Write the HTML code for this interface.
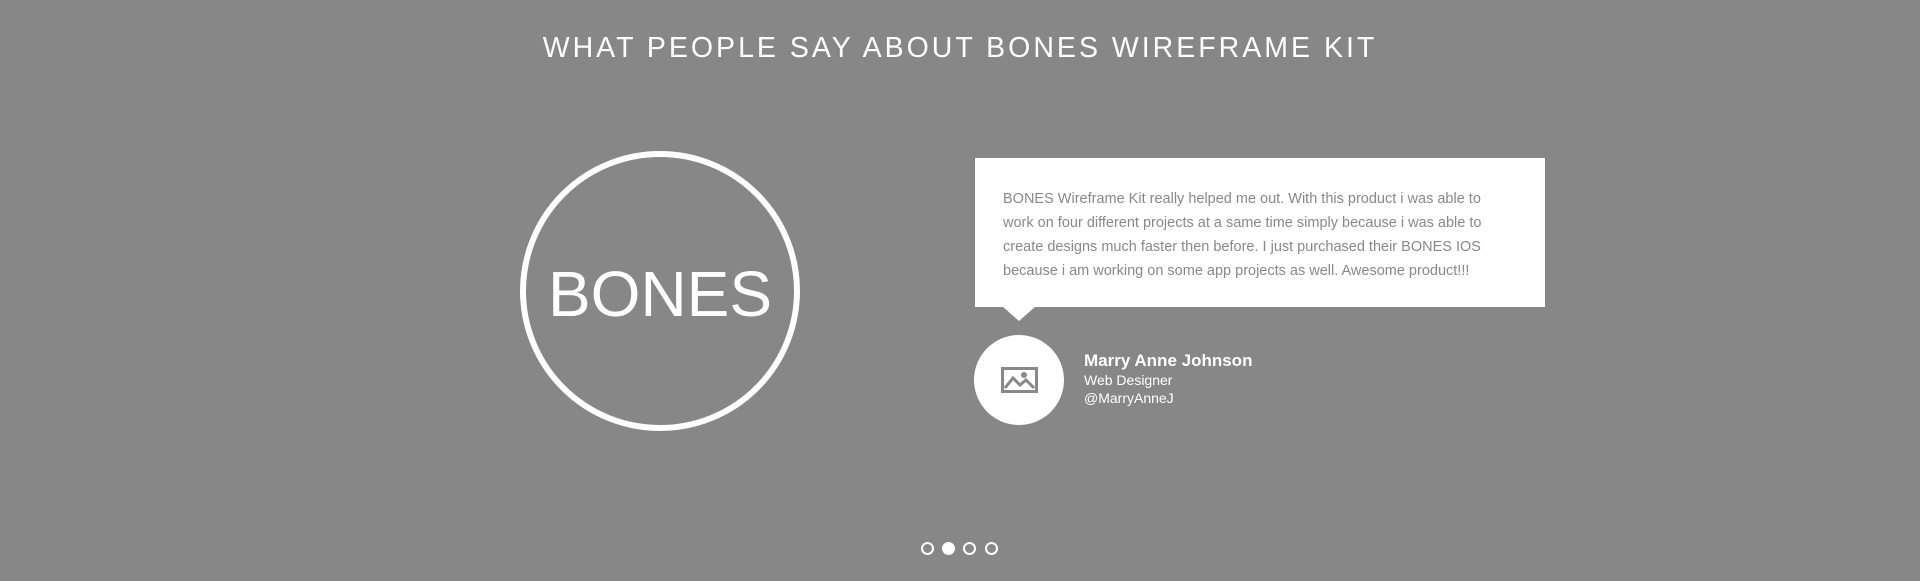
<!DOCTYPE html>
<html><head><style>
body{margin:0;width:1920px;height:581px;background:#878787;font-family:"Liberation Sans",sans-serif;position:relative;overflow:hidden;color:#fff}
.t{position:absolute;top:32px;left:0;width:1920px;text-align:center;font-size:28.5px;letter-spacing:3px;color:#fff}
.box{position:absolute;left:975px;top:158px;width:570px;height:149px;background:#fff;box-sizing:border-box;padding:29px 30px 0 28px;color:#888;font-size:14.5px;line-height:24px}
.tri{position:absolute;left:1002px;top:306px;width:0;height:0;border-left:17px solid transparent;border-right:17px solid transparent;border-top:15px solid #fff}
.av{position:absolute;left:974px;top:335px;width:90px;height:90px;border-radius:50%;background:#fff}
.n{position:absolute;left:1084px;top:351px;font-size:17px;font-weight:bold}
.s{position:absolute;left:1084px;font-size:14px}
.d{position:absolute;top:542px;width:9px;height:9px;border:2.5px solid #fff;border-radius:50%}
</style></head><body>
<div class="t">WHAT PEOPLE SAY ABOUT BONES WIREFRAME KIT</div>
<svg style="position:absolute;left:515px;top:146px" width="290" height="290">
<circle cx="145" cy="145" r="137" fill="none" stroke="#fff" stroke-width="6"/>
<text x="145" y="170" text-anchor="middle" font-family="Liberation Sans" font-size="64" fill="#fff">BONES</text>
</svg>
<div class="box">BONES Wireframe Kit really helped me out. With this product i was able to work on four different projects at a same time simply because i was able to create designs much faster then before. I just purchased their BONES IOS because i am working on some app projects as well. Awesome product!!!</div>
<div class="tri"></div>
<div class="av"><svg style="position:absolute;left:27px;top:32px" width="37" height="26"><rect x="1.5" y="1.5" width="34" height="23" fill="none" stroke="#888" stroke-width="3"/><path d="M4 21 L12 11 L19 18 L25 13 L33 21" fill="none" stroke="#888" stroke-width="3"/><circle cx="23" cy="8" r="3" fill="#888"/></svg></div>
<div class="n">Marry Anne Johnson</div>
<div class="s" style="top:372px">Web Designer</div>
<div class="s" style="top:390px">@MarryAnneJ</div>
<div class="d" style="left:921px"></div>
<div class="d" style="left:942px;background:#fff"></div>
<div class="d" style="left:963px"></div>
<div class="d" style="left:985px"></div>
</body></html>
